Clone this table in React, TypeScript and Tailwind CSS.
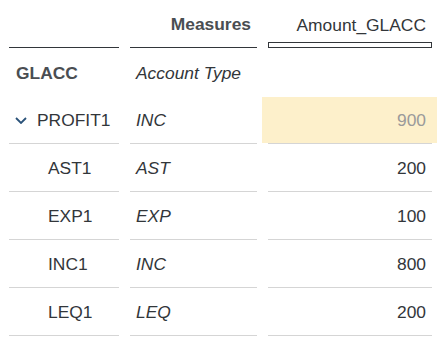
const rows = [
  { id: "AST1", type: "AST", amount: "200" },
  { id: "EXP1", type: "EXP", amount: "100" },
  { id: "INC1", type: "INC", amount: "800" },
  { id: "LEQ1", type: "LEQ", amount: "200" },
];

function Chevron() {
  return (
    <svg width="12" height="7" viewBox="0 0 12 7" className="shrink-0">
      <path d="M1 1l5 5 5-5" fill="none" stroke="#2a5279" strokeWidth="1.8" />
    </svg>
  );
}

export default function App() {
  return (
    <div
      className="w-[440px] h-[344px] bg-white text-[#32363a] text-[17.4px] overflow-hidden"
      style={{ fontFamily: '"Liberation Sans", Arial, sans-serif' }}
    >
      <div className="grid grid-cols-[110px_127px_164px] gap-x-[11px] pl-[9px]">
        {/* header */}
        <div className="h-[48px] border-b border-[#32363a]" />
        <div className="h-[48px] border-b border-[#32363a] flex items-center justify-end pr-[6px] pt-[2px] font-bold text-[#4a4e52]">
          Measures
        </div>
        <div className="h-[48px] flex flex-col">
          <div className="flex-1 flex items-center justify-end pr-[6px] pt-[8px]">Amount_GLACC</div>
          <div className="h-[6px] border border-[#32363a] bg-white" />
        </div>

        {/* dimension titles */}
        <div className="h-[48px] flex items-center pl-[7px] pt-[2px] font-bold text-[#4a4e52]">GLACC</div>
        <div className="h-[48px] flex items-center pl-[6px] pt-[2px] italic">Account Type</div>
        <div className="h-[48px]" />

        {/* parent row */}
        <div className="h-[48px] border-b border-[#d5d5d5] flex items-center gap-[10px] pl-[6px] pt-[2px]">
          <Chevron />
          <span>PROFIT1</span>
        </div>
        <div className="h-[48px] border-b border-[#d5d5d5] flex items-center pl-[6px] pt-[2px] italic">INC</div>
        <div className="h-[48px] border-b border-[#d5d5d5] flex">
          <div className="flex-1 mt-px -ml-[6px] -mr-[5px] bg-[#fdf0cb] flex items-center justify-end pr-[11px] pt-[1px] text-[#9a9a9a]">
            900
          </div>
        </div>

        {rows.map((r) => (
          <div key={r.id} className="contents">
            <div className="h-[48px] border-b border-[#d5d5d5] flex items-center pl-[39px] pt-[2px]">{r.id}</div>
            <div className="h-[48px] border-b border-[#d5d5d5] flex items-center pl-[6px] pt-[2px] italic">{r.type}</div>
            <div className="h-[48px] border-b border-[#d5d5d5] flex items-center justify-end pr-[6px] pt-[2px]">
              {r.amount}
            </div>
          </div>
        ))}
      </div>
    </div>
  );
}
